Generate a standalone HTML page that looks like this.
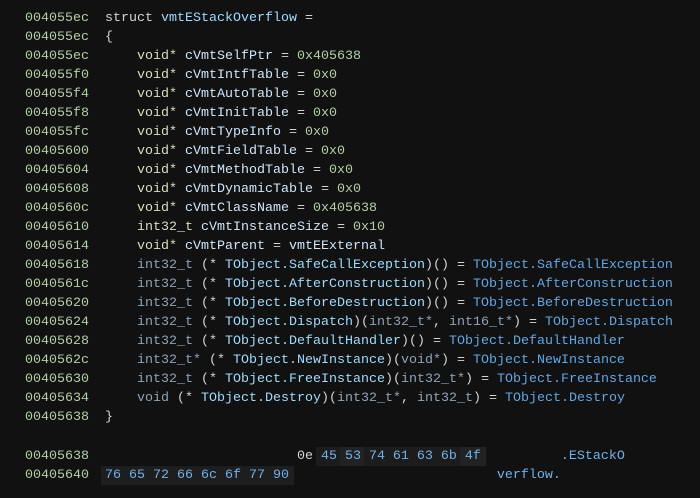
<!DOCTYPE html>
<html><head><meta charset="utf-8"><style>
html,body{margin:0;padding:0;background:#111111;width:700px;height:498px;overflow:hidden}
body{font-family:"Liberation Mono",monospace;font-size:13.33px;color:#d4d4d4}
.r{position:absolute;left:0;height:19px;line-height:19px;white-space:pre}
.a{position:absolute;left:25px;color:#b5cea8}
.c{position:absolute;left:105px}
.k{color:#dcdcc0}
.i{color:#cfe6fa}
.n{color:#b5cea8}
.t{color:#8fa3b8}
.f{color:#9cdcfe}
.b{color:#5fa8e6}
.h{color:#6cb4ee}
.bx{position:absolute;background:#1c1c1c}
</style></head><body>
<div class="r" style="top:9px"><span class="a">004055ec</span><span class="c">struct <span class="f">vmtEStackOverflow</span> =</span></div>
<div class="r" style="top:28px"><span class="a">004055ec</span><span class="c">{</span></div>
<div class="r" style="top:47px"><span class="a">004055ec</span><span class="c">    <span class="k">void*</span> <span class="i">cVmtSelfPtr</span> = <span class="n">0x405638</span></span></div>
<div class="r" style="top:66px"><span class="a">004055f0</span><span class="c">    <span class="k">void*</span> <span class="i">cVmtIntfTable</span> = <span class="n">0x0</span></span></div>
<div class="r" style="top:85px"><span class="a">004055f4</span><span class="c">    <span class="k">void*</span> <span class="i">cVmtAutoTable</span> = <span class="n">0x0</span></span></div>
<div class="r" style="top:104px"><span class="a">004055f8</span><span class="c">    <span class="k">void*</span> <span class="i">cVmtInitTable</span> = <span class="n">0x0</span></span></div>
<div class="r" style="top:123px"><span class="a">004055fc</span><span class="c">    <span class="k">void*</span> <span class="i">cVmtTypeInfo</span> = <span class="n">0x0</span></span></div>
<div class="r" style="top:142px"><span class="a">00405600</span><span class="c">    <span class="k">void*</span> <span class="i">cVmtFieldTable</span> = <span class="n">0x0</span></span></div>
<div class="r" style="top:161px"><span class="a">00405604</span><span class="c">    <span class="k">void*</span> <span class="i">cVmtMethodTable</span> = <span class="n">0x0</span></span></div>
<div class="r" style="top:180px"><span class="a">00405608</span><span class="c">    <span class="k">void*</span> <span class="i">cVmtDynamicTable</span> = <span class="n">0x0</span></span></div>
<div class="r" style="top:199px"><span class="a">0040560c</span><span class="c">    <span class="k">void*</span> <span class="i">cVmtClassName</span> = <span class="n">0x405638</span></span></div>
<div class="r" style="top:218px"><span class="a">00405610</span><span class="c">    <span class="k">int32_t</span> <span class="i">cVmtInstanceSize</span> = <span class="n">0x10</span></span></div>
<div class="r" style="top:237px"><span class="a">00405614</span><span class="c">    <span class="k">void*</span> <span class="i">cVmtParent</span> = <span class="i">vmtEExternal</span></span></div>
<div class="r" style="top:256px"><span class="a">00405618</span><span class="c">    <span class="t">int32_t</span> (* <span class="f">TObject.SafeCallException</span>)() = <span class="b">TObject.SafeCallException</span></span></div>
<div class="r" style="top:275px"><span class="a">0040561c</span><span class="c">    <span class="t">int32_t</span> (* <span class="f">TObject.AfterConstruction</span>)() = <span class="b">TObject.AfterConstruction</span></span></div>
<div class="r" style="top:294px"><span class="a">00405620</span><span class="c">    <span class="t">int32_t</span> (* <span class="f">TObject.BeforeDestruction</span>)() = <span class="b">TObject.BeforeDestruction</span></span></div>
<div class="r" style="top:313px"><span class="a">00405624</span><span class="c">    <span class="t">int32_t</span> (* <span class="f">TObject.Dispatch</span>)(<span class="t">int32_t*</span>, <span class="t">int16_t*</span>) = <span class="b">TObject.Dispatch</span></span></div>
<div class="r" style="top:332px"><span class="a">00405628</span><span class="c">    <span class="t">int32_t</span> (* <span class="f">TObject.DefaultHandler</span>)() = <span class="b">TObject.DefaultHandler</span></span></div>
<div class="r" style="top:351px"><span class="a">0040562c</span><span class="c">    <span class="t">int32_t*</span> (* <span class="f">TObject.NewInstance</span>)(<span class="t">void*</span>) = <span class="b">TObject.NewInstance</span></span></div>
<div class="r" style="top:370px"><span class="a">00405630</span><span class="c">    <span class="t">int32_t</span> (* <span class="f">TObject.FreeInstance</span>)(<span class="t">int32_t*</span>) = <span class="b">TObject.FreeInstance</span></span></div>
<div class="r" style="top:389px"><span class="a">00405634</span><span class="c">    <span class="t">void</span> (* <span class="f">TObject.Destroy</span>)(<span class="t">int32_t*</span>, <span class="t">int32_t</span>) = <span class="b">TObject.Destroy</span></span></div>
<div class="r" style="top:408px"><span class="a">00405638</span><span class="c">}</span></div>
<div class="bx" style="left:316px;top:447px;width:170px;height:19px"></div>
<div class="bx" style="left:340px;top:447px;width:24px;height:19px;background:#222222"></div>
<div class="bx" style="left:460px;top:447px;width:26px;height:19px;background:#222222"></div>
<div class="bx" style="left:101px;top:466px;width:193px;height:19px;background:#1e1e1e"></div>
<div class="r" style="top:447px"><span class="a">00405638</span><span class="c">                        0e <span class="h">45 53 74 61 63 6b 4f</span>          <span class="h">.EStackO</span></span></div>
<div class="r" style="top:466px"><span class="a">00405640</span><span class="c"><span class="h">76 65 72 66 6c 6f 77 90</span>                          <span class="h">verflow.</span></span></div>
</body></html>
